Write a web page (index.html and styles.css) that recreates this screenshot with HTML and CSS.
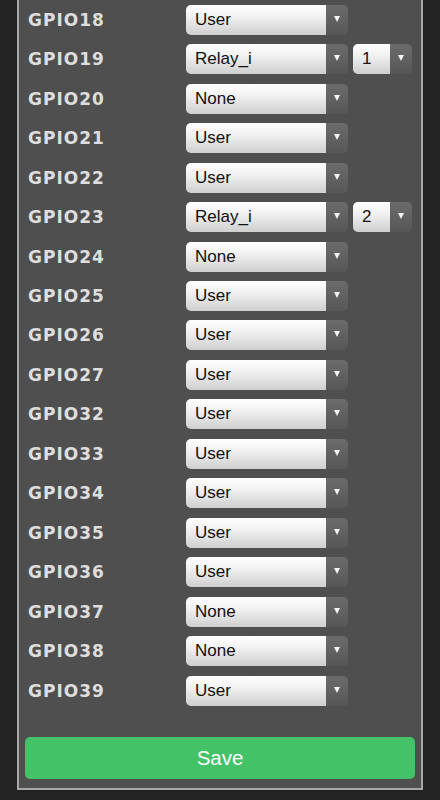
FILE: index.html
```html
<!DOCTYPE html>
<html>
<head>
<meta charset="utf-8">
<link rel="stylesheet" href="styles.css">
</head>
<body>
<div class="panel">
  <div class="rows">
    <div class="row"><span class="label">GPIO18</span><span class="sel"><span class="val">User</span></span></div>
    <div class="row"><span class="label">GPIO19</span><span class="sel"><span class="val">Relay_i</span></span><span class="sel small"><span class="val">1</span></span></div>
    <div class="row"><span class="label">GPIO20</span><span class="sel"><span class="val">None</span></span></div>
    <div class="row"><span class="label">GPIO21</span><span class="sel"><span class="val">User</span></span></div>
    <div class="row"><span class="label">GPIO22</span><span class="sel"><span class="val">User</span></span></div>
    <div class="row"><span class="label">GPIO23</span><span class="sel"><span class="val">Relay_i</span></span><span class="sel small"><span class="val">2</span></span></div>
    <div class="row"><span class="label">GPIO24</span><span class="sel"><span class="val">None</span></span></div>
    <div class="row"><span class="label">GPIO25</span><span class="sel"><span class="val">User</span></span></div>
    <div class="row"><span class="label">GPIO26</span><span class="sel"><span class="val">User</span></span></div>
    <div class="row"><span class="label">GPIO27</span><span class="sel"><span class="val">User</span></span></div>
    <div class="row"><span class="label">GPIO32</span><span class="sel"><span class="val">User</span></span></div>
    <div class="row"><span class="label">GPIO33</span><span class="sel"><span class="val">User</span></span></div>
    <div class="row"><span class="label">GPIO34</span><span class="sel"><span class="val">User</span></span></div>
    <div class="row"><span class="label">GPIO35</span><span class="sel"><span class="val">User</span></span></div>
    <div class="row"><span class="label">GPIO36</span><span class="sel"><span class="val">User</span></span></div>
    <div class="row"><span class="label">GPIO37</span><span class="sel"><span class="val">None</span></span></div>
    <div class="row"><span class="label">GPIO38</span><span class="sel"><span class="val">None</span></span></div>
    <div class="row"><span class="label">GPIO39</span><span class="sel"><span class="val">User</span></span></div>
  </div>
  <button class="save">Save</button>
</div>
</body>
</html>
```
FILE: styles.css
```css
html, body {
  margin: 0;
  padding: 0;
  background: #232323;
}
body {
  width: 440px;
  height: 800px;
  overflow: hidden;
}
.panel {
  margin-left: 17px;
  background: #4f4f4f;
  border: 2px solid #a8a8a8;
  border-top: none;
  padding: 0 6px 9px 6px;
  box-sizing: content-box;
  width: 390px;
}
.rows {
  display: flex;
  flex-direction: column;
  padding-left: 3px;
}
.row {
  display: flex;
  align-items: center;
  height: 39.47px;
}
.label {
  width: 158px;
  flex: none;
  font-family: "DejaVu Sans", Verdana, sans-serif;
  font-weight: bold;
  font-size: 17px;
  letter-spacing: 1px;
  color: #dedede;
}
.sel {
  position: relative;
  display: flex;
  align-items: center;
  width: 162px;
  height: 30px;
  box-sizing: border-box;
  border-radius: 5px;
  background: linear-gradient(#6b6b6b, #575757);
  overflow: hidden;
  flex: none;
}
.sel.small {
  width: 59px;
  margin-left: 5px;
}
.val {
  display: flex;
  align-items: center;
  height: 100%;
  flex: 1;
  padding-left: 9px;
  margin-right: 22px;
  background: linear-gradient(#ffffff, #f0f0f0 40%, #cfcfcf);
  font-family: "Liberation Sans", Arial, sans-serif;
  font-size: 17px;
  color: #111;
}
.sel::after {
  content: "";
  position: absolute;
  right: 8px;
  top: 11px;
  width: 0;
  height: 0;
  border-left: 3.5px solid transparent;
  border-right: 3.5px solid transparent;
  border-top: 6px solid #f4f4f4;
}
.save {
  display: block;
  width: 390px;
  height: 42px;
  margin-top: 27px;
  border: none;
  border-radius: 5px;
  background: #43c267;
  color: #fff;
  font-family: "Liberation Sans", Arial, sans-serif;
  font-size: 20.5px;
  padding: 0;
}
```
